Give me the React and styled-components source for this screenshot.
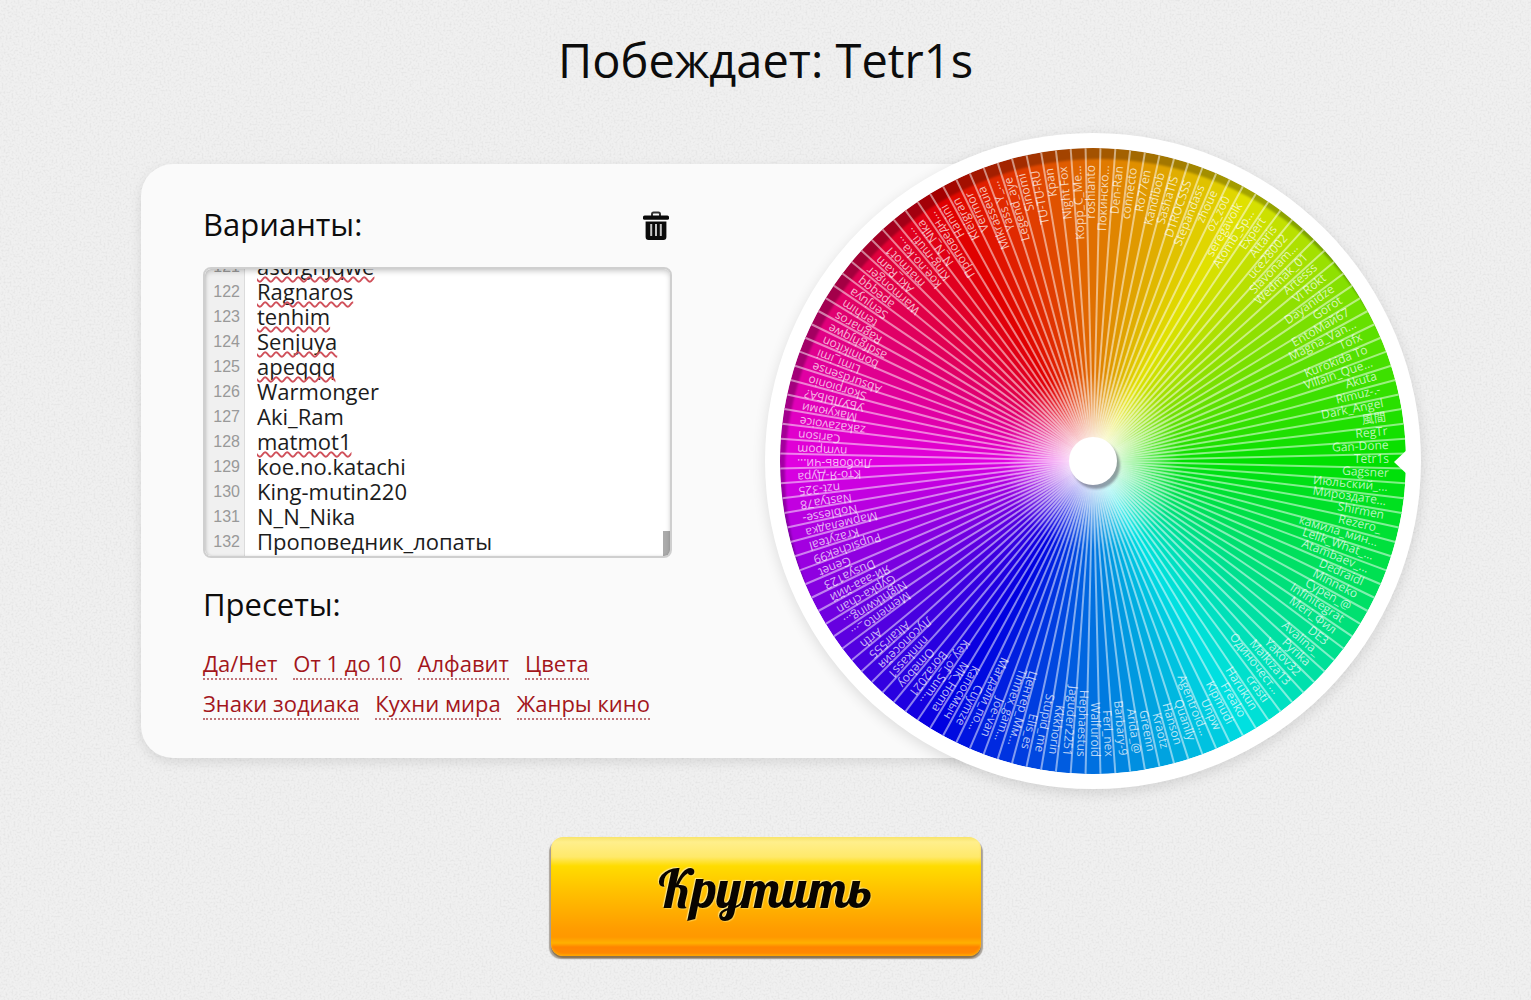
import React, { useLayoutEffect, useRef, useState } from "react";
import styled, { createGlobalStyle, css } from "styled-components";

const sans = `"Open Sans", "Noto Sans", "Noto Sans CJK JP", sans-serif`;

const GlobalStyle = createGlobalStyle`
  *, *::before, *::after { box-sizing: border-box; }
  body {
    margin: 0;
    background: #f0f0f0;
    color: #0c0c0c;
    font-family: ${sans};
  }
`;

const Page = styled.main`
  position: relative;
  isolation: isolate;
  overflow: hidden;
  min-height: 100vh;
  display: flex;
  flex-direction: column;
  align-items: center;
  padding: 28px 24px 44px;
`;

const PaperTexture = styled.svg`
  position: absolute;
  inset: 0;
  z-index: -1;
  width: 100%;
  height: 100%;
`;

const Title = styled.h1`
  margin: 0 0 41px;
  font-size: 47px;
  line-height: 64px;
  font-weight: 400;
  text-align: center;
`;

const Stage = styled.div`
  display: flex;
  align-items: center;
  width: 100%;
  max-width: 1311px;
  padding-left: 31px;
`;

const Card = styled.section`
  flex: 1;
  min-width: 0;
  padding: 40px 62px 38px;
  border-radius: 32px;
  background: #fafafa;
  box-shadow: 0 4px 12px rgba(0, 0, 0, 0.1);
`;

const CardBody = styled.div`
  max-width: 469px;
`;

const CardHeader = styled.div`
  display: flex;
  align-items: flex-end;
  justify-content: space-between;
  margin-bottom: 23px;
`;

const Heading = styled.h2`
  margin: 0;
  font-size: 31px;
  line-height: 40px;
  font-weight: 400;
`;

const IconButton = styled.button`
  display: flex;
  padding: 0 3px 3px;
  border: 0;
  background: none;
  color: #0a0a0a;
  cursor: pointer;
`;

const Editor = styled.div`
  position: relative;
  display: flex;
  height: 291px;
  border: 2px solid #cfcfcf;
  border-radius: 8px;
  background: #fff;
  overflow: hidden;

  &::after {
    content: "";
    position: absolute;
    inset: 0;
    border-radius: 6px;
    box-shadow: inset 0 3px 5px rgba(0, 0, 0, 0.16), inset 1px 0 3px rgba(0, 0, 0, 0.1);
    pointer-events: none;
  }
`;

const Gutter = styled.div`
  flex: none;
  width: 40px;
  border-right: 1px solid #dcdcdc;
  background: #f0f0f0;
`;

const LineNumbers = styled.ol`
  margin: 0;
  padding: 0 4px 0 0;
  list-style: none;
  color: #999;
  font: 16px/25px "Liberation Sans", Arial, sans-serif;
  text-align: right;
`;

const TextPane = styled.div`
  position: relative;
  flex: 1;
  overflow: hidden;
`;

const textMetrics = css`
  margin: 0;
  border: 0;
  font: 22px/25px ${sans};
  white-space: pre;
`;

const TextArea = styled.textarea`
  ${textMetrics}
  display: block;
  width: 100%;
  height: 100%;
  padding: 0 12px 2px;
  background: transparent;
  color: #1c1c1c;
  resize: none;
  outline: none;
  overflow-x: hidden;
  overflow-y: auto;
  scrollbar-width: none;
`;

const SpellingLayer = styled.div`
  ${textMetrics}
  position: absolute;
  inset: 0;
  padding: 0 12px;
  color: transparent;
  pointer-events: none;
`;

const Misspelled = styled.span`
  text-decoration: underline wavy #d0505a 2px;
  text-decoration-skip-ink: none;
  text-underline-offset: 1px;
`;

const ScrollThumb = styled.div`
  position: absolute;
  right: 0;
  width: 7px;
  background: #ababab;
`;

const Presets = styled.section`
  margin-top: 26px;
`;

const PresetList = styled.nav`
  display: flex;
  flex-wrap: wrap;
  gap: 8px 16px;
  margin-top: 24px;
`;

const PresetLink = styled.a`
  border-bottom: 2px dotted #c07478;
  color: #a3161b;
  font-size: 22px;
  line-height: 30px;
  text-decoration: none;
`;

const WheelFrame = styled.div`
  position: relative;
  flex: none;
  width: 656px;
  height: 656px;
  margin-left: -328px;
  border-radius: 50%;
  background: #fff;
  box-shadow: 0 4px 14px rgba(0, 0, 0, 0.12);
`;

const WheelSvg = styled.svg`
  display: block;
  width: 100%;
  height: 100%;
  border-radius: 50%;
`;

const WheelLabel = styled.text`
  font: 12px ${sans};
  fill: rgba(255, 255, 255, 0.72);
  text-anchor: end;
`;

const SpinButton = styled.button`
  width: 430px;
  max-width: 100%;
  height: 119px;
  margin-top: 48px;
  padding: 0 0 18px;
  border: 0;
  border-radius: 12px;
  background: linear-gradient(
    #f8e46a 0,
    #ffef8c 5px,
    #ffe96a 20px,
    #ffdc00 29px,
    #ffc000 55px,
    #ff9c00 92px,
    #ff9800 100px,
    #ffb000 106px,
    #ff8400 110px,
    #ff8a00 100%
  );
  box-shadow: inset 0 -2px 2px rgba(255, 190, 0, 0.5), 0 2px 1px #8a7350,
    -2px 3px 1px #aaa49c, 2px 3px 1px #aaa49c;
  color: #080400;
  font: 400 53px/64px "Lobster", "Liberation Serif", serif;
  text-shadow: -1px -1px 1px #ffe98a, 1px 1px 1px rgba(255, 220, 100, 0.7);
  cursor: pointer;
`;

const NAMES = [
  "Hanini", "Kleigran", "Vermor", "Mikrasseuia", "Yass_Y_...", "Legend_aye", "Sinomi", "TU-TU-RU", "Kpan",
  "Night Fox", "Kopp_C_Me...", "roshianto", "Покинско...", "Den-Ran", "connecto", "Ro77en", "Kandibob", "SashaTIS",
  "D1ROCSSS", "Stepandass", "zhoue", "oz_zo0", "seregavolk", "Atomb_Sp...", "Expert", "Attaris", "uce28002",
  "Slavonam...", "Wedmak_01", "Artesss", "Vi Rokt", "Dayanidze", "Gorot", "EntoMaй67", "Magna_Van...", "Tofx",
  "Kurokida To", "Villain_Que...", "Akuta", "Rimuz-.-", "Dark_Angel", "風間", "RegTr", "Gan-Done", "Tetr1s",
  "Gagsner", "Июльский_...", "Мироздате...", "Shirmen", "Rezero_", "камила_мин...", "Lelik_What_...",
  "Atambaev_...", "Dedraidl", "Minneko", "Cypen_@", "Infinitegrat", "Meri_Фил", "DE3", "Avalina_", "Pyrika",
  "Yakov32", "Malkiza13", "Одиночест...", "crasti", "Harukun", "Freako", "Kipmudi", "Unpw", "Agentroid...",
  "Quanlly", "Hanson", "Kraotz", "Greenn", "Arida_@", "Barbary-9", "Ferl_nex", "Walfuroid", "Hephaestus",
  "Jaguder2251", "Kkkhorin", "Stupid_me", "Elis_es", "Центер_Мм...", "Tinnex_gam...", "Joe-van", "Магдали_по...",
  "Cuymze", "Капосмыч", "MK_Homa", "Key_of_Sum...", "Bora2021", "Omeboy", "nnnkass1", "Лусопосейя", "Altair555",
  "Arth", "Memento_...", "Nightkwing...", "Gypka-chan", "Яй-ааа-ййй", "Dusya123", "Genet", "Pupsichek99",
  "Krazyteal", "Мармеладка", "Noblesse-", "Nastya78", "nzt-325", "Кто-Я-Дура", "Любовь-чи...", "nvmpom", "Carison",
  "zakazavoice", "Макуюми", "УБУЛЫБА?", "Skorpionio", "Absurdsense", "Limi_imi", "bonnikiton", "asdfghjqwe",
  "Ragnaros", "tenhim", "Senjuya", "apeqqq", "Warmonger", "Aki_Ram", "matmot1", "koe.no.katachi",
  "King-mutin220", "N_N_Nika", "Проповедник_лопаты",
];

const MISSPELLED = new Set(["asdfghjqwe", "Ragnaros", "tenhim", "Senjuya", "apeqqq", "matmot1"]);
const PRESETS = ["Да/Нет", "От 1 до 10", "Алфавит", "Цвета", "Знаки зодиака", "Кухни мира", "Жанры кино"];

const shorten = (name) => (name.length > 12 && !name.endsWith("...") ? `${name.slice(0, 9)}...` : name);

const RADIUS = 313;

function Wheel({ names, winner }) {
  const step = 360 / names.length;
  const winnerIndex = names.indexOf(winner);
  const point = (deg, r = RADIUS) => {
    const a = (deg * Math.PI) / 180;
    return `${(r * Math.cos(a)).toFixed(2)} ${(r * Math.sin(a)).toFixed(2)}`;
  };
  const slices = names.map((name, i) => ({ name, hue: i * step, angle: (i - winnerIndex) * step }));

  return (
    <WheelFrame>
      <WheelSvg viewBox="-328 -328 656 656" role="img" aria-label={`Колесо: ${winner}`}>
        <defs>
          <clipPath id="disc">
            <circle r={RADIUS} />
          </clipPath>
          <filter id="soft" x="-20%" y="-20%" width="140%" height="140%">
            <feGaussianBlur stdDeviation="1" />
          </filter>
          <radialGradient id="glow">
            <stop offset="0.2" stopColor="#fff" stopOpacity="0.5" />
            <stop offset="0.5" stopColor="#fff" stopOpacity="0.35" />
            <stop offset="1" stopColor="#fff" stopOpacity="0" />
          </radialGradient>
        </defs>
        <g clipPath="url(#disc)">
          {slices.map(({ hue, angle }) => (
            <path
              key={angle}
              d={`M0 0L${point(angle - step / 2)}A${RADIUS} ${RADIUS} 0 0 1 ${point(angle + step / 2 + 0.2)}Z`}
              fill={`hsl(${hue} 100% 44%)`}
            />
          ))}
          <path
            d="M-340-340H340V340H-340ZM-308 12a314 314 0 1 0 628 0a314 314 0 1 0-628 0Z"
            fill="rgba(0,0,0,.27)"
            fillRule="evenodd"
            filter="url(#soft)"
          />
          {slices.map(({ angle }) => (
            <path
              key={angle}
              d={`M0 0L${point(angle + step / 2)}`}
              stroke="rgba(255,255,255,.5)"
              strokeWidth="2"
            />
          ))}
          <circle r="90" fill="url(#glow)" />
          {slices.map(({ name, angle }) => (
            <WheelLabel key={name} x="296" y="2" transform={`rotate(${angle})`}>
              {shorten(name)}
            </WheelLabel>
          ))}
        </g>
        <path d="M301 1L317-14V16Z" fill="#fff" />
        <circle cx="3" cy="4" r="24" fill="rgba(70,70,90,.5)" filter="url(#soft)" />
        <circle r="24" fill="#fff" />
      </WheelSvg>
    </WheelFrame>
  );
}

function TrashIcon() {
  return (
    <svg width="26" height="30" viewBox="0 0 26 30" aria-hidden="true">
      <path d="M9 5V3.2Q9 1.6 10.6 1.6H15.4Q17 1.6 17 3.2V5" fill="none" stroke="#333" strokeWidth="2" />
      <rect x="0" y="4.4" width="26" height="4.4" rx="1.6" fill="currentColor" />
      <path d="M2.6 10.4H23.4V26Q23.4 29 20.4 29H5.6Q2.6 29 2.6 26Z" fill="currentColor" />
      <path d="M8.2 13V25M13 13V25M17.8 13V25" stroke="#c4c4c4" strokeWidth="2" />
    </svg>
  );
}

const LINE = 25;

function OptionsEditor({ value, onChange }) {
  const area = useRef(null);
  const [view, setView] = useState({ top: 0, visible: 0, total: 1 });
  const lines = value.split("\n");

  const syncView = () => {
    const { scrollTop, scrollHeight, clientHeight } = area.current;
    setView({ top: scrollTop, visible: clientHeight, total: scrollHeight });
  };

  useLayoutEffect(() => {
    area.current.scrollTop = area.current.scrollHeight;
    syncView();
  }, []);

  useLayoutEffect(syncView, [value]);

  const first = Math.floor(view.top / LINE);
  const last = Math.min(lines.length, Math.ceil((view.top + view.visible) / LINE));
  const shift = { transform: `translateY(${first * LINE - view.top}px)` };
  const shown = lines.slice(first, last);

  return (
    <Editor>
      <Gutter aria-hidden="true">
        <LineNumbers style={shift}>
          {shown.map((_, i) => (
            <li key={i}>{first + i + 1}</li>
          ))}
        </LineNumbers>
      </Gutter>
      <TextPane>
        <TextArea
          ref={area}
          aria-labelledby="options-heading"
          spellCheck={false}
          value={value}
          onScroll={syncView}
          onChange={(e) => onChange(e.target.value)}
        />
        <SpellingLayer aria-hidden="true" style={shift}>
          {shown.map((line, i) => (
            <React.Fragment key={i}>
              {MISSPELLED.has(line) && <Misspelled>{line}</Misspelled>}
              {"\n"}
            </React.Fragment>
          ))}
        </SpellingLayer>
      </TextPane>
      <ScrollThumb
        style={{
          top: (view.top / view.total) * view.visible,
          height: (view.visible / view.total) * view.visible,
        }}
      />
    </Editor>
  );
}

export default function App() {
  const [value, setValue] = useState(NAMES.join("\n"));

  return (
    <>
      <GlobalStyle />
      <Page>
        <PaperTexture aria-hidden="true">
          <filter id="paper">
            <feTurbulence type="fractalNoise" baseFrequency="0.5" numOctaves="2" seed="4" />
            <feColorMatrix values="0 0 0 0 0.45  0 0 0 0 0.45  0 0 0 0 0.45  0.5 0 0 0 -0.22" />
          </filter>
          <rect width="100%" height="100%" filter="url(#paper)" />
        </PaperTexture>
        <Title>Побеждает: Tetr1s</Title>
        <Stage>
          <Card>
            <CardBody>
              <CardHeader>
                <Heading id="options-heading">Варианты:</Heading>
                <IconButton type="button" aria-label="Очистить" onClick={() => setValue("")}>
                  <TrashIcon />
                </IconButton>
              </CardHeader>
              <OptionsEditor value={value} onChange={setValue} />
              <Presets>
                <Heading>Пресеты:</Heading>
                <PresetList>
                  {PRESETS.map((preset) => (
                    <PresetLink key={preset} href="#">
                      {preset}
                    </PresetLink>
                  ))}
                </PresetList>
              </Presets>
            </CardBody>
          </Card>
          <Wheel names={NAMES} winner="Tetr1s" />
        </Stage>
        <SpinButton type="button">Крутить</SpinButton>
      </Page>
    </>
  );
}
